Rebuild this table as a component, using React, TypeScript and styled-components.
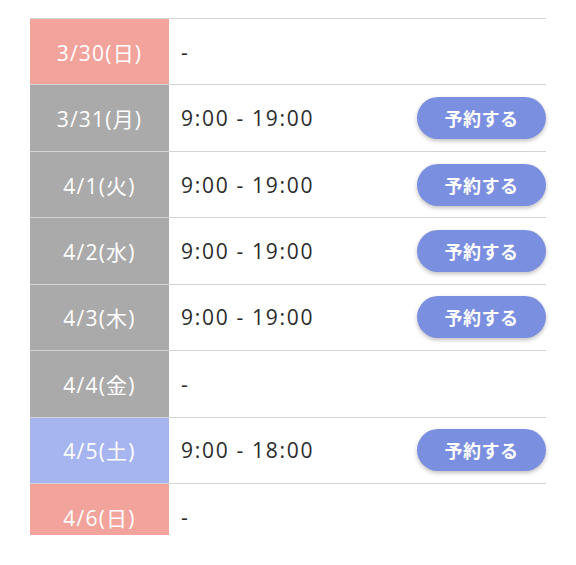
import styled, { createGlobalStyle } from "styled-components";

const GlobalStyle = createGlobalStyle`
  body {
    margin: 0;
    background: #fff;
    font-family: "Open Sans", "Noto Sans CJK JP", sans-serif;
  }
`;

type DayKind = "sun" | "sat" | "weekday";

const dayColors: Record<DayKind, string> = {
  sun: "#f2a39b",
  sat: "#a6b5ef",
  weekday: "#aaaaaa",
};

const Wrapper = styled.div`
  padding: 18px 30px 0 30px;
  height: 517px;
  overflow: hidden;
`;

const Table = styled.div`
  width: 516px;
  border-top: 1px solid #d4d4d4;
`;

const Row = styled.div`
  display: grid;
  grid-template-columns: 139px 1fr;
  height: 66.43px;
  box-sizing: border-box;
  border-bottom: 1px solid #d4d4d4;
`;

const DateCell = styled.div<{ $kind: DayKind }>`
  background: ${({ $kind }) => dayColors[$kind]};
  color: #fff;
  font-size: 21px;
  letter-spacing: 1.2px;
  display: flex;
  align-items: center;
  justify-content: center;
`;

const SlotCell = styled.div`
  display: flex;
  align-items: center;
  justify-content: space-between;
  padding-left: 12px;
  color: #2b2b2b;
  font-size: 21px;
  letter-spacing: 1.7px;
`;

const ReserveButton = styled.button.attrs({ type: "button" })`
  width: 129px;
  height: 42px;
  border: none;
  border-radius: 21px;
  background: #7b8fe0;
  color: #fff;
  font-family: "Noto Sans CJK JP", sans-serif;
  font-weight: 700;
  font-size: 18px;
  letter-spacing: 0.5px;
  box-shadow: 0 2px 4px rgba(0, 0, 0, 0.25);
  cursor: pointer;
`;

const days: { date: string; kind: DayKind; hours?: string }[] = [
  { date: "3/30(日)", kind: "sun" },
  { date: "3/31(月)", kind: "weekday", hours: "9:00 - 19:00" },
  { date: "4/1(火)", kind: "weekday", hours: "9:00 - 19:00" },
  { date: "4/2(水)", kind: "weekday", hours: "9:00 - 19:00" },
  { date: "4/3(木)", kind: "weekday", hours: "9:00 - 19:00" },
  { date: "4/4(金)", kind: "weekday" },
  { date: "4/5(土)", kind: "sat", hours: "9:00 - 18:00" },
  { date: "4/6(日)", kind: "sun" },
];

function App() {
  return (
    <>
      <GlobalStyle />
      <Wrapper>
        <Table>
          {days.map((d) => (
            <Row key={d.date}>
              <DateCell $kind={d.kind}>{d.date}</DateCell>
              <SlotCell>
                <span>{d.hours ?? "-"}</span>
                {d.hours && <ReserveButton>予約する</ReserveButton>}
              </SlotCell>
            </Row>
          ))}
        </Table>
      </Wrapper>
    </>
  );
}

export default App;
